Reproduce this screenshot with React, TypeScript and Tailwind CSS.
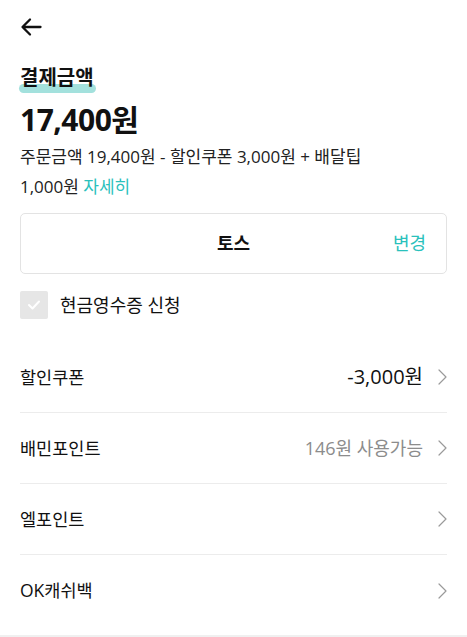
const font = "font-['Open_Sans','Noto_Sans_CJK_KR',sans-serif]";

function Chevron() {
  return (
    <svg width="9" height="16" viewBox="0 0 9 16" fill="none" className="shrink-0">
      <path d="M1 1 L8 8 L1 15" stroke="#9a9a9a" strokeWidth="1.2" strokeLinecap="round" strokeLinejoin="round" />
    </svg>
  );
}

interface RowProps {
  label: string;
  value?: string;
  muted?: boolean;
  last?: boolean;
}

function Row({ label, value, muted, last }: RowProps) {
  return (
    <div className={`flex items-center h-[71px] ${last ? "" : "border-b border-[#ececec]"}`}>
      <span className="text-[17.5px] text-[#111] flex-1">{label}</span>
      {value && (
        <span className={muted ? "text-[18px] text-[#8c8c8c] mr-[15px]" : "text-[20px] text-[#111] mr-[15px]"}>
          {value}
        </span>
      )}
      <Chevron />
    </div>
  );
}

export default function App() {
  return (
    <div className={`w-[467px] h-[637px] bg-white overflow-hidden flex flex-col ${font}`}>
      <div className="px-5 flex-1">
        <div className="h-[50px] flex items-center pt-[4px]">
          <svg width="22" height="20" viewBox="0 0 22 20" fill="none">
            <path d="M20.5 10 H3 M10 2.5 L2.5 10 L10 17.5" stroke="#111" strokeWidth="2.3" strokeLinecap="round" strokeLinejoin="round" />
          </svg>
        </div>

        <div className="mt-[14px] inline-block relative">
          <span className="absolute left-[-1px] right-[-2px] bottom-[-1px] h-[9px] rounded-full bg-[#a3e1dd]" />
          <span className="relative text-[20px] font-bold text-[#111] leading-[28px]">결제금액</span>
        </div>
        <div className="text-[30px] font-bold text-[#111] leading-[44px] mt-[6px] tracking-[-0.5px]">17,400원</div>
        <p className="text-[17px] text-[#222] leading-[30px]">
          주문금액 19,400원 - 할인쿠폰 3,000원 + 배달팁
          <br />
          1,000원 <span className="text-[#2ac1bc]">자세히</span>
        </p>

        <div className="mt-[11px] h-[61px] border border-[#e3e3e3] rounded-[5px] flex items-center relative">
          <span className="flex-1 text-center text-[18px] font-bold text-[#111]">토스</span>
          <span className="absolute right-[20px] text-[18px] text-[#2ac1bc]">변경</span>
        </div>

        <div className="mt-[17px] flex items-center gap-3">
          <div className="w-[28px] h-[28px] rounded-[2px] bg-[#e6e6e6] flex items-center justify-center">
            <svg width="14" height="12" viewBox="0 0 14 12" fill="none">
              <path d="M2 6 L5.5 9.5 L12 2.5" stroke="#fff" strokeWidth="2" strokeLinecap="round" strokeLinejoin="round" />
            </svg>
          </div>
          <span className="text-[18px] text-[#111]">현금영수증 신청</span>
        </div>

        <div className="mt-[23px]">
          <Row label="할인쿠폰" value="-3,000원" />
          <Row label="배민포인트" value="146원 사용가능" muted />
          <Row label="엘포인트" />
          <Row label="OK캐쉬백" last />
        </div>
      </div>
      <div className="h-[2px] bg-[#f0f0f0]" />
    </div>
  );
}
